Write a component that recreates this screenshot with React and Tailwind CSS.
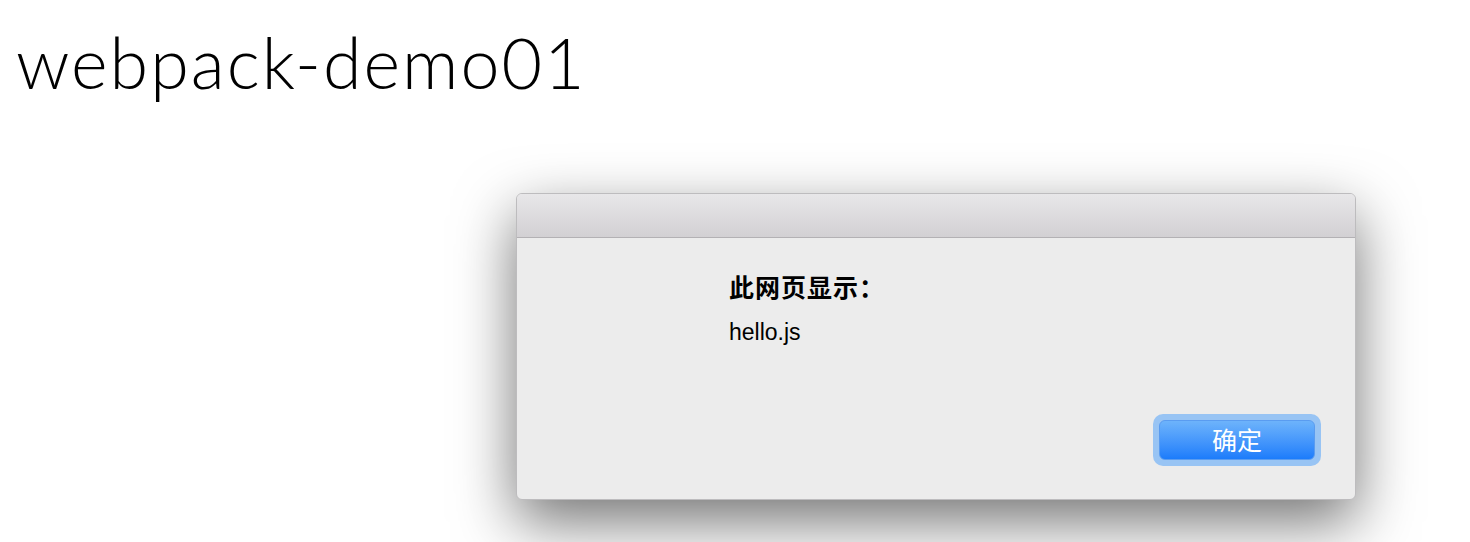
import React from 'react';

const App = () => {
  return (
    <div className="relative w-[1470px] h-[542px] bg-white overflow-hidden" style={{ fontFamily: '"Liberation Sans", "Noto Sans CJK SC", sans-serif' }}>
      {/* Page heading */}
      <h1 className="pl-[16px] pt-[22px] text-[70px] leading-[80px] text-black font-light tracking-[2px]" style={{ fontFamily: 'Lato, "Noto Sans CJK SC", sans-serif' }}>
        webpack-demo01
      </h1>

      {/* Alert dialog */}
      <div className="absolute left-[516px] top-[193px] w-[840px] h-[307px] rounded-[6px] border border-[#bdbcbe] bg-[#ececec] overflow-hidden shadow-[0_22px_60px_rgba(0,0,0,0.55)]">
        <div className="h-[44px] bg-gradient-to-b from-[#e8e7e9] to-[#d2d0d3] border-b border-[#b3b1b4]"></div>
        <div className="relative h-[262px]">
          <div className="pl-[212px] pt-[35px]">
            <div className="text-[25px] leading-[26px] font-bold text-black tracking-[1px]" style={{ fontFamily: '"Noto Sans CJK SC", sans-serif' }}>此网页显示：</div>
            <div className="mt-[19px] text-[23px] leading-[28px] text-black">hello.js</div>
          </div>
          <div className="absolute right-[34px] bottom-[34px] p-[6px] rounded-[10px] bg-[#98c4f4]">
            <button className="block w-[156px] h-[40px] rounded-[6px] border border-[#5a9cf0] bg-gradient-to-b from-[#6db3fb] to-[#1b7cfb] text-white text-[25px] leading-[32px] pb-[2px]" style={{ fontFamily: '"Noto Sans CJK SC", sans-serif' }}>
              确定
            </button>
          </div>
        </div>
      </div>
    </div>
  );
};

export default App;
